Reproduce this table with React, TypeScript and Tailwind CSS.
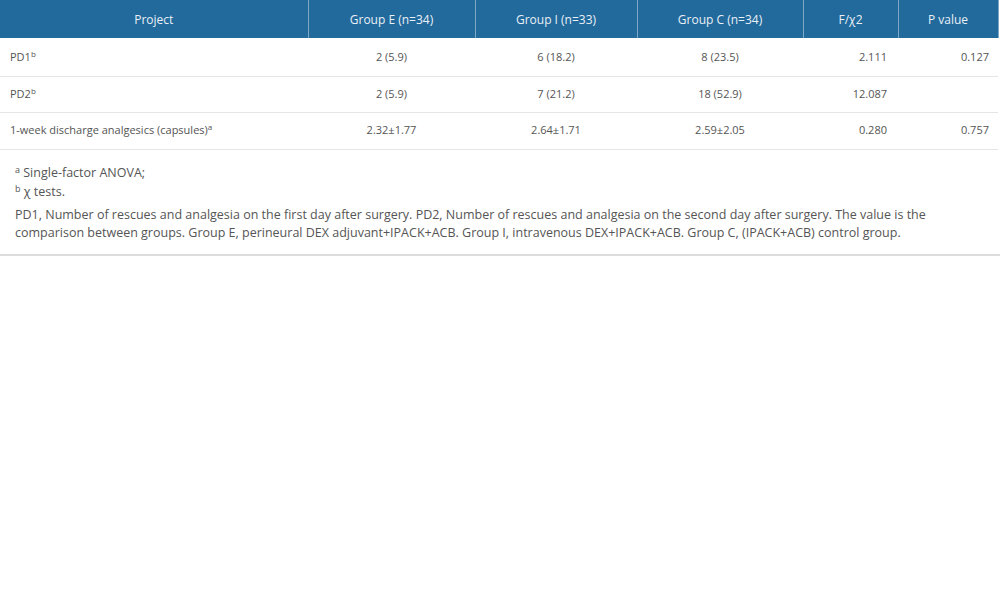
const rows = [
  { name: 'PD1', sup: 'b', e: '2 (5.9)', i: '6 (18.2)', c: '8 (23.5)', f: '2.111', p: '0.127', h: 'h-[38px]' },
  { name: 'PD2', sup: 'b', e: '2 (5.9)', i: '7 (21.2)', c: '18 (52.9)', f: '12.087', p: '', h: 'h-[36px]' },
  {
    name: '1-week discharge analgesics (capsules)',
    sup: 'a',
    e: '2.32±1.77',
    i: '2.64±1.71',
    c: '2.59±2.05',
    f: '0.280',
    p: '0.757',
    h: 'h-[37px]',
  },
];

const heads = ['Project', 'Group E (n=34)', 'Group I (n=33)', 'Group C (n=34)', 'F/χ2', 'P value'];
const widths = ['w-[308px]', 'w-[167px]', 'w-[162px]', 'w-[166px]', 'w-[95px]', 'w-[100px]'];

const App = () => {
  return (
    <div className="w-[1000px] bg-white font-['Open_Sans',sans-serif] text-[#555]">
      <div className="pr-[2px]">
        <table className="w-[998px] table-fixed border-collapse">
          <thead>
            <tr className="h-[38px] bg-[#22699c] text-[12px] text-[#e9f0f6]">
              {heads.map((h, k) => (
                <th
                  key={h}
                  className={`${widths[k]} border-x border-[#7ea8c8] pt-[1px] font-normal text-center first:border-l-0`}
                >
                  {h}
                </th>
              ))}
            </tr>
          </thead>
          <tbody className="text-[11px]">
            {rows.map((r) => (
              <tr key={r.name} className={`${r.h} border-b border-[#e6e6e6]`}>
                <td className="pl-[10px] text-left">
                  {r.name}
                  <span className="relative -top-[4px] text-[8px]">{r.sup}</span>
                </td>
                <td className="text-center">{r.e}</td>
                <td className="text-center">{r.i}</td>
                <td className="text-center">{r.c}</td>
                <td className="pr-[11px] text-right">{r.f}</td>
                <td className="pr-[9px] text-right">{r.p}</td>
              </tr>
            ))}
          </tbody>
        </table>
      </div>
      <div className="border-b-2 border-[#dcdcdc] px-[15px] pt-[14px] pb-[12px] text-[12.5px] leading-[18px]">
        <div>
          <span className="relative -top-[4px] text-[9px]">a</span> Single-factor ANOVA;
        </div>
        <div>
          <span className="relative -top-[4px] text-[9px]">b</span> χ tests.
        </div>
        <p className="mt-[4px]">
          PD1, Number of rescues and analgesia on the first day after surgery. PD2, Number of rescues and analgesia on
          the second day after surgery. The value is the comparison between groups. Group E, perineural DEX
          adjuvant+IPACK+ACB. Group I, intravenous DEX+IPACK+ACB. Group C, (IPACK+ACB) control group.
        </p>
      </div>
    </div>
  );
};

export default App;
